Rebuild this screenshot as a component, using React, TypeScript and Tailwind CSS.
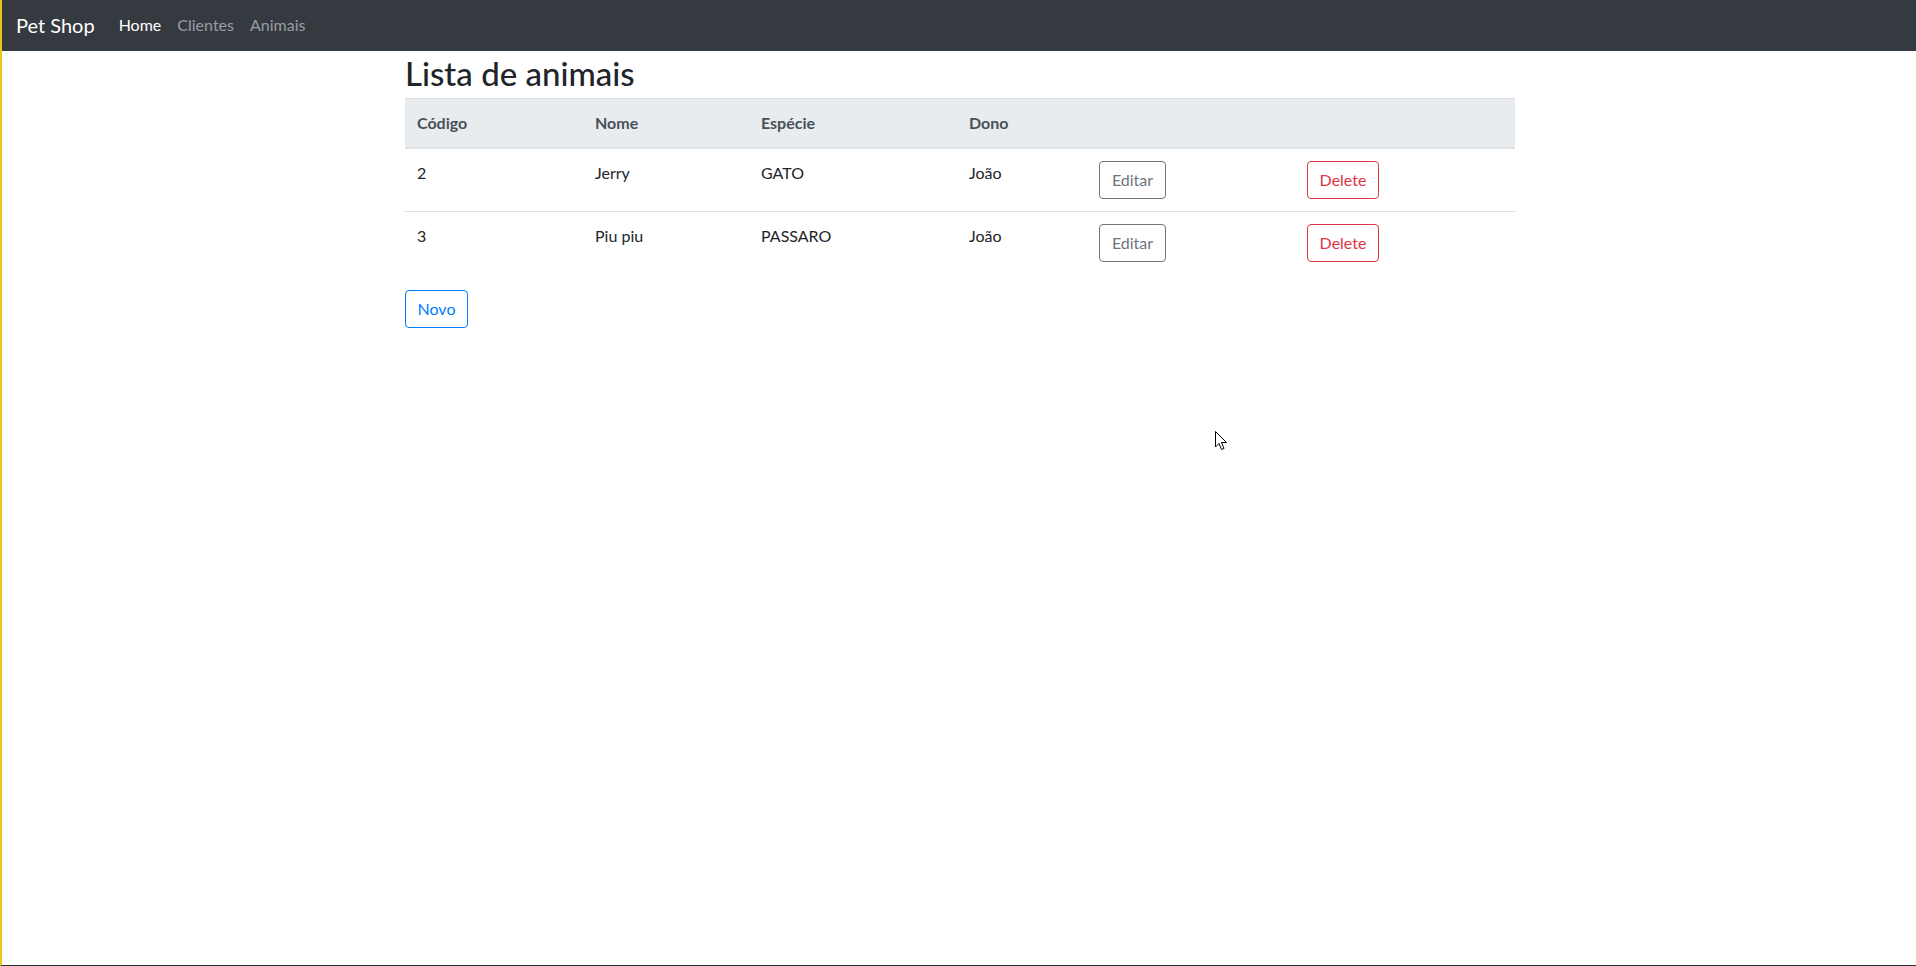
import React from "react"

const animais = [
  { codigo: 2, nome: "Jerry", especie: "GATO", dono: "João" },
  { codigo: 3, nome: "Piu piu", especie: "PASSARO", dono: "João" },
]

export default function App() {
  return (
    <div
      className="relative h-[966px] w-[1916px] overflow-hidden border-l-2 border-b border-l-[#e8c81a] border-b-[#2b2d3a] bg-white text-[#212529]"
      style={{ fontFamily: "Lato, 'Noto Sans', sans-serif" }}
    >
      <nav className="flex h-[51px] items-center bg-[#343a40] pb-[1px] pl-[14px]">
        <span className="mr-[16px] text-[20px] leading-[30px] text-white">Pet Shop</span>
        <a className="px-[8px] text-[16px] text-white">Home</a>
        <a className="px-[8px] text-[16px] text-[#9a9da0]">Clientes</a>
        <a className="px-[8px] text-[16px] text-[#9a9da0]">Animais</a>
      </nav>

      <div className="mx-auto w-[1110px] translate-x-[1px]">
        <h2 className="mb-[6px] pt-[3px] text-[33px] font-medium leading-[38px]">Lista de animais</h2>
        <table className="mb-[16px] w-full table-fixed border-collapse text-[16px]">
          <thead className="bg-[#e9ecef] text-[#495057]">
            <tr>
              <th className="w-[178px] border-t border-b-2 border-[#dee2e6] p-[12px] text-left align-bottom font-bold leading-[24px]">Código</th>
              <th className="w-[166px] border-t border-b-2 border-[#dee2e6] p-[12px] text-left align-bottom font-bold leading-[24px]">Nome</th>
              <th className="w-[208px] border-t border-b-2 border-[#dee2e6] p-[12px] text-left align-bottom font-bold leading-[24px]">Espécie</th>
              <th className="w-[130px] border-t border-b-2 border-[#dee2e6] p-[12px] text-left align-bottom font-bold leading-[24px]">Dono</th>
              <th className="w-[208px] border-t border-b-2 border-[#dee2e6] p-[12px]"></th>
              <th className="w-[220px] border-t border-b-2 border-[#dee2e6] p-[12px]"></th>
            </tr>
          </thead>
          <tbody>
            {animais.map((a, i) => (
              <tr key={a.codigo}>
                <td className={`${i > 0 ? "border-t border-[#dee2e6]" : ""} p-[12px] align-top leading-[24px]`}>{a.codigo}</td>
                <td className={`${i > 0 ? "border-t border-[#dee2e6]" : ""} p-[12px] align-top leading-[24px]`}>{a.nome}</td>
                <td className={`${i > 0 ? "border-t border-[#dee2e6]" : ""} p-[12px] align-top leading-[24px]`}>{a.especie}</td>
                <td className={`${i > 0 ? "border-t border-[#dee2e6]" : ""} p-[12px] align-top leading-[24px]`}>{a.dono}</td>
                <td className={`${i > 0 ? "border-t border-[#dee2e6]" : ""} p-[12px] align-top`}>
                  <button className="h-[38px] w-[67px] rounded-[4px] border border-[#6c757d] text-[16px] leading-[24px] text-[#6c757d]">
                    Editar
                  </button>
                </td>
                <td className={`${i > 0 ? "border-t border-[#dee2e6]" : ""} p-[12px] align-top`}>
                  <button className="h-[38px] w-[72px] rounded-[4px] border border-[#dc3545] text-[16px] leading-[24px] text-[#dc3545]">
                    Delete
                  </button>
                </td>
              </tr>
            ))}
          </tbody>
        </table>
        <button className="h-[38px] w-[63px] rounded-[4px] border border-[#007bff] text-[16px] leading-[24px] text-[#007bff]">
          Novo
        </button>
      </div>

      <svg className="absolute left-[1213px] top-[431px]" width="13" height="20" viewBox="0 0 13 20">
        <path d="M0.5 0.5 L0.5 16 L4 12.5 L6.5 18.5 L9 17.5 L6.5 11.5 L11.5 11.5 Z" fill="white" stroke="black" strokeWidth="1" strokeLinejoin="round" />
      </svg>
    </div>
  )
}
